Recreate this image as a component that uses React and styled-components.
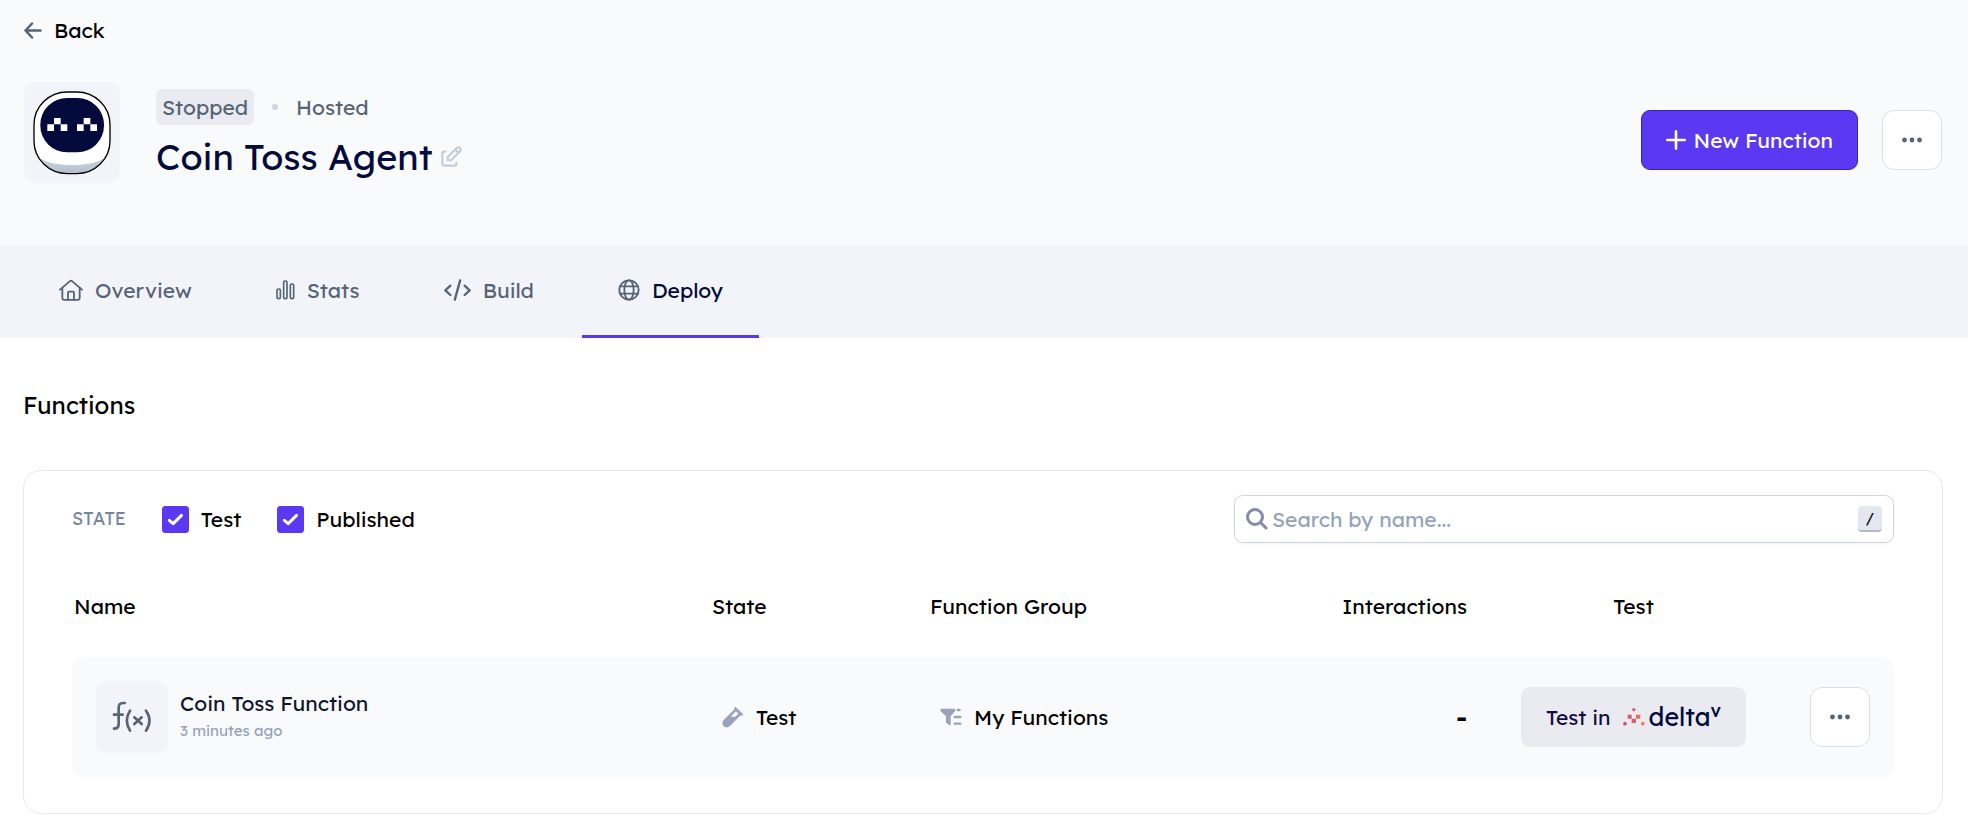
import React from "react";
import styled, { createGlobalStyle, css } from "styled-components";
import { TbEdit } from "react-icons/tb";

const color = {
  ink: "#000",
  navy: "#020b3b",
  slate: "#566477",
  muted: "#94a3bc",
  violet: "#5b39f3",
  line: "#e6e8f0",
  control: "#dcdfe9",
  surface: "#f9fafc",
  band: "#f3f4f9",
  chip: "#e9ebf1",
};

const GlobalStyle = createGlobalStyle`
  *, *::before, *::after { box-sizing: border-box; }
  body {
    margin: 0;
    background: #fff;
    color: ${color.ink};
    font-family: Lexend, Inter, sans-serif;
    font-size: 21px;
    font-weight: 400;
    line-height: 28px;
  }
  button, input { font: inherit; }
  svg { display: block; flex: none; }
`;

const Header = styled.header`
  background: ${color.surface};
  padding: 16px 24px 62px;
`;

const BackLink = styled.a`
  display: flex;
  align-items: center;
  gap: 12px;
  width: fit-content;
  color: ${color.ink};
  text-decoration: none;
`;

const HeaderRow = styled.div`
  display: flex;
  align-items: center;
  margin-top: 38px;
`;

const AvatarTile = styled.div`
  display: grid;
  place-items: center;
  width: 96px;
  height: 101px;
  border-radius: 12px;
  background: ${color.band};
`;

const Identity = styled.div`
  flex: 1;
  margin: 4px 0 0 36px;
`;

const Meta = styled.div`
  display: flex;
  align-items: center;
  color: ${color.slate};
`;

const Badge = styled.span`
  padding: 4px 6px;
  border-radius: 6px;
  background: ${color.chip};
`;

const Dot = styled.span`
  width: 6px;
  height: 6px;
  margin: 0 18px;
  border-radius: 50%;
  background: #d0d7e2;
`;

const TitleRow = styled.div`
  display: flex;
  align-items: center;
  gap: 6px;
  margin-top: 8px;
`;

const Title = styled.h1`
  margin: 0;
  color: ${color.navy};
  font-size: 36px;
  font-weight: 400;
  line-height: 48px;
`;

const IconButton = styled.button`
  padding: 0;
  border: 0;
  background: none;
  color: #c3cedb;
  cursor: pointer;
`;

const Actions = styled.div`
  display: flex;
  align-items: center;
  gap: 24px;
  margin: 14px 2px 0 0;
`;

const PrimaryButton = styled.button`
  display: flex;
  align-items: center;
  justify-content: center;
  gap: 7px;
  height: 60px;
  padding: 0 24px;
  border: 1px solid #3c1fb8;
  border-radius: 9px;
  background: ${color.violet};
  color: #fff;
  cursor: pointer;
`;

const MoreButton = styled.button`
  display: inline-grid;
  place-items: center;
  width: 60px;
  height: 60px;
  padding: 0;
  border: 1px solid ${color.control};
  border-radius: 12px;
  background: #fff;
  color: ${color.slate};
  vertical-align: middle;
  cursor: pointer;
`;

const Tabs = styled.nav`
  display: flex;
  gap: 12px;
  padding: 0 23px;
  background: ${color.band};
`;

const Tab = styled.a`
  display: flex;
  align-items: center;
  gap: 12px;
  padding: 31px 36px;
  border-bottom: 3px solid transparent;
  color: ${color.slate};
  text-decoration: none;
  ${(p) =>
    p.$active &&
    css`
      border-color: ${color.violet};
      span { color: ${color.navy}; }
    `}
`;

const Main = styled.main`
  padding: 50px 25px 18px 23px;
`;

const SectionTitle = styled.h2`
  margin: 0 0 48px;
  font-size: 24px;
  font-weight: 400;
  line-height: 34px;
`;

const Card = styled.section`
  padding: 24px 48px 36px;
  border: 1px solid ${color.line};
  border-radius: 18px;
`;

const Filters = styled.div`
  display: flex;
  align-items: center;
  justify-content: space-between;
`;

const StateFilter = styled.fieldset`
  display: flex;
  align-items: center;
  margin: 0;
  padding: 0;
  border: 0;
`;

const FilterName = styled.span`
  margin-right: 36px;
  color: #7685a0;
  font-size: 18px;
`;

const CheckLabel = styled.label`
  display: flex;
  align-items: center;
  gap: 12px;
  margin-right: 36px;
  cursor: pointer;
`;

const CheckBox = styled.span`
  display: grid;
  svg, input { grid-area: 1 / 1; }
  svg { pointer-events: none; z-index: 1; visibility: hidden; }
  input:checked + svg { visibility: visible; }
`;

const CheckInput = styled.input`
  appearance: none;
  width: 27px;
  height: 27px;
  margin: 0;
  border: 1px solid ${color.violet};
  border-radius: 3px;
  &:checked { background: ${color.violet}; }
`;

const SearchBox = styled.label`
  display: flex;
  align-items: center;
  gap: 4px;
  flex: 0 1 660px;
  height: 48px;
  padding: 0 11px;
  border: 1px solid #cfd6e1;
  border-radius: 9px;
  box-shadow: 0 1px 3px rgba(20, 30, 60, 0.06);
`;

const SearchInput = styled.input`
  flex: 1;
  min-width: 0;
  padding: 0;
  border: 0;
  outline: 0;
  background: none;
  color: ${color.ink};
  &::placeholder { color: ${color.muted}; opacity: 1; }
`;

const Key = styled.kbd`
  width: 24px;
  height: 26px;
  border-bottom: 2px solid #b3b9c8;
  border-radius: 4px;
  background: #e3e7ef;
  font-family: inherit;
  font-size: 15px;
  line-height: 24px;
  text-align: center;
`;

const Table = styled.table`
  width: 100%;
  margin-top: 34px;
  border-collapse: separate;
  border-spacing: 0;
  table-layout: fixed;
`;

const HeadCell = styled.th`
  width: ${(p) => p.$width || "auto"};
  height: 80px;
  padding: 15px ${(p) => p.$end || "0"} 37px ${(p) => p.$start || "0"};
  font-weight: 400;
  text-align: ${(p) => p.$align || "left"};
`;

const Cell = styled.td`
  height: 120px;
  padding: 0 ${(p) => p.$end || "0"} 0 ${(p) => p.$start || "0"};
  background: ${color.surface};
  text-align: ${(p) => p.$align || "left"};
  &:first-child { border-radius: 12px 0 0 12px; }
  &:last-child { border-radius: 0 12px 12px 0; }
`;

const Inline = styled.div`
  display: flex;
  align-items: center;
  gap: 12px;
`;

const FunctionTile = styled.div`
  display: grid;
  place-items: center;
  width: 72px;
  height: 72px;
  border-radius: 10px;
  background: ${color.band};
`;

const FunctionName = styled.div`
  color: #11152f;
`;

const FunctionTime = styled.div`
  margin: 2px 0;
  color: ${color.muted};
  font-size: 15px;
  line-height: 24px;
`;

const Interactions = styled.strong`
  font-size: 24px;
  font-weight: 700;
`;

const TestButton = styled.button`
  display: inline-flex;
  align-items: center;
  justify-content: center;
  gap: 12px;
  width: 225px;
  height: 60px;
  padding: 0;
  border: 0;
  border-radius: 9px;
  background: ${color.chip};
  color: #160b42;
  vertical-align: middle;
  cursor: pointer;
`;

const DeltaLogo = styled.span`
  display: flex;
  align-items: center;
  gap: 4px;
  color: ${color.navy};
  font-size: 25px;
  sup {
    align-self: flex-start;
    font-size: 18px;
    font-weight: 500;
    line-height: 16px;
  }
`;

const Wordmark = styled.span`
  display: flex;
`;

function ArrowLeft() {
  return (
    <svg width="18" height="17" viewBox="0 0 18 17" fill="none" stroke={color.slate} strokeWidth="2.5" strokeLinecap="round" strokeLinejoin="round" aria-hidden="true">
      <path d="M16.500 8.500H1.500M8 1.500L1.500 8.500l6.500 7" />
    </svg>
  );
}

function Avatar() {
  return (
    <svg width="78" height="84" viewBox="39 62 234 252" role="img" aria-label="Agent avatar">
      <defs>
        <linearGradient id="chin" x1="0" y1="0" x2="0" y2="1">
          <stop offset="0.7" stopColor="#dde4ec" />
          <stop offset="1" stopColor="#adbbca" />
        </linearGradient>
        <clipPath id="head">
          <rect x="42" y="65" width="228" height="245" rx="100" ry="98" />
        </clipPath>
      </defs>
      <g clipPath="url(#head)">
        <rect x="40" y="60" width="232" height="254" fill="url(#chin)" />
        <path d="M40 60H272V235C262 270 220 284 156 284S50 270 40 235Z" fill="#fff" />
      </g>
      <rect x="42" y="65" width="228" height="245" rx="100" ry="98" fill="none" stroke="#000" strokeWidth="4" />
      <rect x="61" y="83" width="191" height="163" rx="80" ry="80" fill={color.navy} />
      <path fill="#fff" d="M102 143h20v19h-20zM82 162h20v20H82zM122 162h20v20h-20zM191 143h20v19h-20zM171 162h20v20h-20zM211 162h20v20h-20z" />
    </svg>
  );
}

function Plus() {
  return (
    <svg width="20" height="20" viewBox="0 0 20 20" stroke="currentColor" strokeWidth="2.600" strokeLinecap="round" aria-hidden="true">
      <path d="M10 1.300V18.700M1.300 10H18.700" />
    </svg>
  );
}

function Dots() {
  return (
    <svg width="20" height="6" viewBox="0 0 20 6" fill="currentColor" aria-hidden="true">
      <circle cx="2.500" cy="3" r="2.400" />
      <circle cx="10" cy="3" r="2.400" />
      <circle cx="17.500" cy="3" r="2.400" />
    </svg>
  );
}

const tabStroke = { fill: "none", stroke: color.slate, strokeLinecap: "round", strokeLinejoin: "round", "aria-hidden": true };

function HomeIcon() {
  return (
    <svg width="24" height="22" viewBox="176 118 72 66" {...tabStroke} strokeWidth="5.500">
      <path d="M179 150L209 124.500Q212 122 215 124.500L245 150" />
      <path d="M186 145V175Q186 180.500 191.500 180.500H232Q238 180.500 238 175V145" />
      <path d="M203 180V159Q203 156 206 156H218Q221 156 221 159V180" />
    </svg>
  );
}

function StatsIcon() {
  return (
    <svg width="19" height="20" viewBox="824 122 57 60" {...tabStroke} strokeWidth="5">
      <rect x="827" y="149" width="10" height="29" rx="4" />
      <rect x="847" y="125" width="10" height="53" rx="4" />
      <rect x="867" y="134" width="10" height="44" rx="4" />
    </svg>
  );
}

function CodeIcon() {
  return (
    <svg width="27" height="22" viewBox="128 118 81 66" {...tabStroke} strokeWidth="7">
      <path d="M147 138L132 152L147 166M190 138L205 152L190 166M176.500 122L160.500 180" />
    </svg>
  );
}

function GlobeIcon() {
  return (
    <svg width="22" height="22" viewBox="647 119 66 66" {...tabStroke} strokeWidth="5.500">
      <circle cx="680" cy="152" r="29" />
      <ellipse cx="680" cy="152" rx="14" ry="29" />
      <path d="M653 141H707M653 163H707" />
    </svg>
  );
}

function SearchIcon() {
  return (
    <svg width="22" height="22" viewBox="0 0 22 22" fill="none" stroke="#868aa8" strokeWidth="3" strokeLinecap="round" aria-hidden="true">
      <circle cx="9" cy="9" r="7.500" />
      <path d="M14.800 14.800L20 20" />
    </svg>
  );
}

function Check() {
  return (
    <svg width="27" height="27" viewBox="0 0 81 81" fill="none" stroke="#fff" strokeWidth="9" strokeLinecap="round" strokeLinejoin="round" aria-hidden="true">
      <path d="M22 43L33.500 53L58.500 28" />
    </svg>
  );
}

function FunctionIcon() {
  return (
    <svg width="40" height="32" viewBox="187 183 120 96" fill="none" stroke={color.slate} strokeWidth="8" strokeLinecap="round" strokeLinejoin="round" aria-hidden="true">
      <path d="M225 189H220Q207 189 207 203V252Q207 266 193 266M193 224H219" />
      <path d="M241 212Q222 241 241 272M289 212Q310 241 289 272M254 232L276 252M276 232L254 252" />
    </svg>
  );
}

function TubeIcon() {
  return (
    <svg width="22" height="22" viewBox="125 409 66 66" fill="#98a3bb" aria-hidden="true">
      <path d="M165 411L189 434L184 439L181 437L149 469Q139 477 130 470Q122 460 130 451L163 418L161 416Z" />
      <path d="M151 441L167 425L174 432L165 441Z" fill={color.surface} />
    </svg>
  );
}

function GroupIcon() {
  return (
    <svg width="22" height="18" viewBox="779 415 66 54" fill="#98a3bb" aria-hidden="true">
      <path d="M782 417H823Q826 418 824 425L811 440V464Q811 468 807 466L797 459V440L781 425Q779 418 782 417Z" />
      <path d="M832 421H838M823 442H840M823 462H840" stroke="#98a3bb" strokeWidth="7" strokeLinecap="round" />
    </svg>
  );
}

function DeltaMark() {
  return (
    <svg width="22" height="20" viewBox="65 54 66 60" aria-hidden="true">
      <defs>
        <linearGradient id="delta" gradientUnits="userSpaceOnUse" x1="66" y1="0" x2="130" y2="0">
          <stop offset="0" stopColor="#c9508a" />
          <stop offset="0.5" stopColor="#d85f6b" />
          <stop offset="1" stopColor="#f08050" />
        </linearGradient>
      </defs>
      <g fill="url(#delta)">
        <circle cx="97.500" cy="62" r="5" />
        <path d="M79 77h12v12h-12zM104 77h13v12h-13zM91 89h13v13h-13z" />
        <circle cx="71" cy="104" r="5.500" />
        <circle cx="124.500" cy="104" r="5.500" />
      </g>
    </svg>
  );
}

const tabs = [
  { name: "Overview", Icon: HomeIcon },
  { name: "Stats", Icon: StatsIcon },
  { name: "Build", Icon: CodeIcon },
  { name: "Deploy", Icon: GlobeIcon, active: true },
];

function StateCheck({ label }) {
  return (
    <CheckLabel>
      <CheckBox>
        <CheckInput type="checkbox" defaultChecked />
        <Check />
      </CheckBox>
      {label}
    </CheckLabel>
  );
}

export default function App() {
  return (
    <>
      <GlobalStyle />
      <Header>
        <BackLink href="#agents">
          <ArrowLeft />
          Back
        </BackLink>
        <HeaderRow>
          <AvatarTile>
            <Avatar />
          </AvatarTile>
          <Identity>
            <Meta>
              <Badge>Stopped</Badge>
              <Dot />
              <span>Hosted</span>
            </Meta>
            <TitleRow>
              <Title>Coin Toss Agent</Title>
              <IconButton type="button" aria-label="Rename agent">
                <TbEdit size={26} />
              </IconButton>
            </TitleRow>
          </Identity>
          <Actions>
            <PrimaryButton type="button">
              <Plus />
              New Function
            </PrimaryButton>
            <MoreButton type="button" aria-label="Agent options">
              <Dots />
            </MoreButton>
          </Actions>
        </HeaderRow>
      </Header>
      <Tabs>
        {tabs.map(({ name, Icon, active }) => (
          <Tab key={name} href={`#${name.toLowerCase()}`} $active={active} aria-current={active ? "page" : undefined}>
            <Icon />
            <span>{name}</span>
          </Tab>
        ))}
      </Tabs>
      <Main>
        <SectionTitle>Functions</SectionTitle>
        <Card>
          <Filters>
            <StateFilter aria-label="State">
              <FilterName>STATE</FilterName>
              <StateCheck label="Test" />
              <StateCheck label="Published" />
            </StateFilter>
            <SearchBox>
              <SearchIcon />
              <SearchInput type="text" placeholder="Search by name..." aria-label="Search by name" />
              <Key>/</Key>
            </SearchBox>
          </Filters>
          <Table>
            <thead>
              <tr>
                <HeadCell $start="2px">Name</HeadCell>
                <HeadCell $width="218px" $start="10px">State</HeadCell>
                <HeadCell $width="330px" $start="10px">Function Group</HeadCell>
                <HeadCell $width="247px" $end="30px" $align="right">Interactions</HeadCell>
                <HeadCell $width="273px" $align="center">Test</HeadCell>
                <HeadCell $width="124px" aria-label="Options" />
              </tr>
            </thead>
            <tbody>
              <tr>
                <Cell $start="24px">
                  <Inline>
                    <FunctionTile>
                      <FunctionIcon />
                    </FunctionTile>
                    <div>
                      <FunctionName>Coin Toss Function</FunctionName>
                      <FunctionTime>3 minutes ago</FunctionTime>
                    </div>
                  </Inline>
                </Cell>
                <Cell $start="20px">
                  <Inline>
                    <TubeIcon />
                    Test
                  </Inline>
                </Cell>
                <Cell $start="20px">
                  <Inline>
                    <GroupIcon />
                    My Functions
                  </Inline>
                </Cell>
                <Cell $end="30px" $align="right">
                  <Interactions>-</Interactions>
                </Cell>
                <Cell $align="center">
                  <TestButton type="button">
                    Test in
                    <DeltaLogo>
                      <DeltaMark />
                      <Wordmark>
                        delta<sup>v</sup>
                      </Wordmark>
                    </DeltaLogo>
                  </TestButton>
                </Cell>
                <Cell $end="24px" $align="right">
                  <MoreButton type="button" aria-label="Function options">
                    <Dots />
                  </MoreButton>
                </Cell>
              </tr>
            </tbody>
          </Table>
        </Card>
      </Main>
    </>
  );
}
